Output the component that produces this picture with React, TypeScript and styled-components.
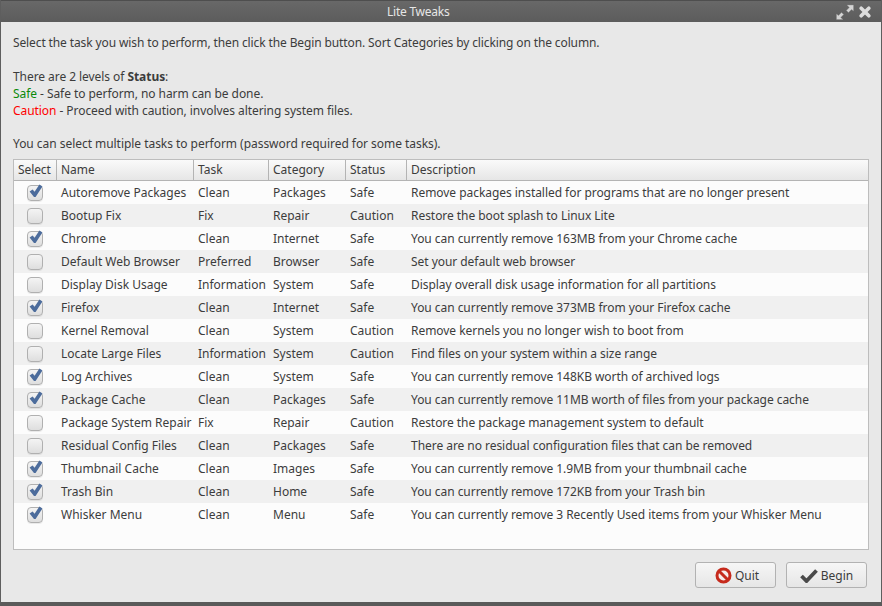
import React from "react";
import styled, { createGlobalStyle } from "styled-components";

const Global = createGlobalStyle`
  html, body { margin: 0; padding: 0; background: #e8e8e8; }
  body { font-family: "Noto Sans", "Open Sans", sans-serif; font-size: 12px; color: #3c3c3c; }
`;

const Window = styled.div`
  width: 882px; height: 606px; box-sizing: border-box;
  display: flex; flex-direction: column;
  background: #e8e8e8;
  border-left: 1px solid #5e5e5e; border-right: 1px solid #5e5e5e; border-bottom: 4px solid #5a5a5a;
  overflow: hidden;
`;
const TitleBar = styled.div`
  height: 22px; flex: none; margin: 0 -1px; padding: 0 11px 0 387px;
  display: flex; align-items: center; justify-content: space-between;
  background: linear-gradient(#686868, #5c5c5c);
  border-top: 1px solid #4e4e4e; box-sizing: border-box;
  color: #e6e6e6; font-size: 12px; letter-spacing: -0.02em;
`;
const TitleText = styled.div``;
const TitleIcons = styled.div` display: flex; gap: 5px; align-items: center; `;
const Content = styled.div`
  flex: 1; min-height: 0; display: flex; flex-direction: column;
  padding: 12px;
`;
const Intro = styled.div` line-height: 17px; height: 125px; flex: none; letter-spacing: -0.06px; `;
const Para = styled.p<{ $tight?: boolean }>`
  margin: 0 0 16px;
  ${p => (p.$tight ? "letter-spacing: -0.118px;" : "")}
  &:first-child { margin-bottom: 17px; }
  &:last-child { margin: 0; letter-spacing: -0.04px; }
`;
const Line = styled.div``;
const Colored = styled.span<{ $c: string }>` color: ${p => p.$c}; `;
const TableBox = styled.div`
  height: 391px; flex: none; box-sizing: border-box;
  background: #fcfcfc; border: 1px solid #bdbdbd;
`;
const Grid = "43px 137px 75px 77px 61px 1fr";
const Header = styled.div`
  display: grid; grid-template-columns: ${Grid}; height: 21px; box-sizing: border-box;
  background: linear-gradient(#fafafa, #e6e6e6);
  border-bottom: 1px solid #b4b4b4;
`;
const HeadCell = styled.div`
  padding-left: 4px; line-height: 20px; border-right: 1px solid #b4b4b4;
  &:first-child { letter-spacing: -0.1px; }
  &:last-child { border-right: 0; }
`;
const Row = styled.div<{ $alt: boolean }>`
  display: grid; grid-template-columns: ${Grid}; height: 23px; align-items: center;
  background: ${p => (p.$alt ? "#f0f0f0" : "#fcfcfc")};
`;
const Cell = styled.div<{ $desc?: boolean }>`
  padding-left: 4px; white-space: nowrap;
  ${p => (p.$desc ? "letter-spacing: -0.045px;" : "")}
`;
const CheckCell = styled.div` display: flex; justify-content: center; padding-right: 1px; `;
const Box = styled.div`
  width: 16px; height: 16px; box-sizing: border-box; position: relative;
  border: 1px solid #b0b0b0; border-radius: 4px;
  background: linear-gradient(#f4f4f4, #dedede);
  box-shadow: 0 1px 0 rgba(0,0,0,.07);
`;
const Mark = styled.svg` position: absolute; left: 0; top: -2px; `;
const Footer = styled.div` display: flex; justify-content: flex-end; gap: 10px; margin-top: 12px; padding-right: 2px; `;
const Button = styled.div`
  height: 26px; box-sizing: border-box; width: 81px;
  display: flex; align-items: center; justify-content: center; gap: 3px;
  border: 1px solid #b2b2b2; border-radius: 3px;
  background: linear-gradient(#f6f6f6, #e6e6e6);
`;

const tasks: [boolean, string, string, string, string, string][] = [
  [true, "Autoremove Packages", "Clean", "Packages", "Safe", "Remove packages installed for programs that are no longer present"],
  [false, "Bootup Fix", "Fix", "Repair", "Caution", "Restore the boot splash to Linux Lite"],
  [true, "Chrome", "Clean", "Internet", "Safe", "You can currently remove 163MB from your Chrome cache"],
  [false, "Default Web Browser", "Preferred", "Browser", "Safe", "Set your default web browser"],
  [false, "Display Disk Usage", "Information", "System", "Safe", "Display overall disk usage information for all partitions"],
  [true, "Firefox", "Clean", "Internet", "Safe", "You can currently remove 373MB from your Firefox cache"],
  [false, "Kernel Removal", "Clean", "System", "Caution", "Remove kernels you no longer wish to boot from"],
  [false, "Locate Large Files", "Information", "System", "Caution", "Find files on your system within a size range"],
  [true, "Log Archives", "Clean", "System", "Safe", "You can currently remove 148KB worth of archived logs"],
  [true, "Package Cache", "Clean", "Packages", "Safe", "You can currently remove 11MB worth of files from your package cache"],
  [false, "Package System Repair", "Fix", "Repair", "Caution", "Restore the package management system to default"],
  [false, "Residual Config Files", "Clean", "Packages", "Safe", "There are no residual configuration files that can be removed"],
  [true, "Thumbnail Cache", "Clean", "Images", "Safe", "You can currently remove 1.9MB from your thumbnail cache"],
  [true, "Trash Bin", "Clean", "Home", "Safe", "You can currently remove 172KB from your Trash bin"],
  [true, "Whisker Menu", "Clean", "Menu", "Safe", "You can currently remove 3 Recently Used items from your Whisker Menu"],
];

const heads = ["Select", "Name", "Task", "Category", "Status", "Description"];

export default function App() {
  return (
    <Window>
      <Global />
      <TitleBar>
        <TitleText>Lite Tweaks</TitleText>
        <TitleIcons>
          <svg width="18" height="16" viewBox="0 0 18 16">
            <path d="M11 1h6.5v6l-2-1.5-3 3-2.2-2 3-3zM7 15.5H.5V10l2 1.5 3-3 2.2 2-3 3z" fill="#d4d4d4" stroke="#8a8a8a" strokeWidth=".4" />
          </svg>
          <svg width="12" height="12" viewBox="0 0 12 12">
            <path d="M2.2 2.2l7.6 7.6M9.8 2.2l-7.6 7.6" stroke="#dcdcdc" strokeWidth="3.6" strokeLinecap="round" />
          </svg>
        </TitleIcons>
      </TitleBar>
      <Content>
        <Intro>
          <Para $tight>Select the task you wish to perform, then click the Begin button. Sort Categories by clicking on the column.</Para>
          <Para>
            <Line>There are 2 levels of <b>Status</b>:</Line>
            <Line><Colored $c="#0a8a0a">Safe</Colored> - Safe to perform, no harm can be done.</Line>
            <Line><Colored $c="#ff0000">Caution</Colored> - Proceed with caution, involves altering system files.</Line>
          </Para>
          <Para>You can select multiple tasks to perform (password required for some tasks).</Para>
        </Intro>
        <TableBox>
          <Header>{heads.map(h => <HeadCell key={h}>{h}</HeadCell>)}</Header>
          {tasks.map((t, i) => (
            <Row key={t[1]} $alt={i % 2 === 1}>
              <CheckCell>
                <Box>
                  {t[0] && (
                    <Mark width="16" height="16" viewBox="0 0 16 16">
                      <path d="M1.6 7.6L4.6 5.4 6.6 7.8 11.4.4 14.4 2.4 7.6 13H6z" fill="#4c6c9c" />
                    </Mark>
                  )}
                </Box>
              </CheckCell>
              <Cell>{t[1]}</Cell><Cell>{t[2]}</Cell><Cell>{t[3]}</Cell><Cell>{t[4]}</Cell><Cell $desc>{t[5]}</Cell>
            </Row>
          ))}
        </TableBox>
        <Footer>
          <Button>
            <svg width="17" height="17" viewBox="0 0 17 17" style={{ marginLeft: 3 }}>
              <circle cx="8.5" cy="8.5" r="6.5" fill="#f6ecea" stroke="#c62a1c" strokeWidth="3" />
              <path d="M4 4l9 9" stroke="#c62a1c" strokeWidth="3" />
            </svg>
            Quit
          </Button>
          <Button>
            <svg width="18" height="15" viewBox="0 0 18 15">
              <path d="M1.5 8l5 5 10-10.5" fill="none" stroke="#4a4a4a" strokeWidth="3.8" />
            </svg>
            Begin
          </Button>
        </Footer>
      </Content>
    </Window>
  );
}
